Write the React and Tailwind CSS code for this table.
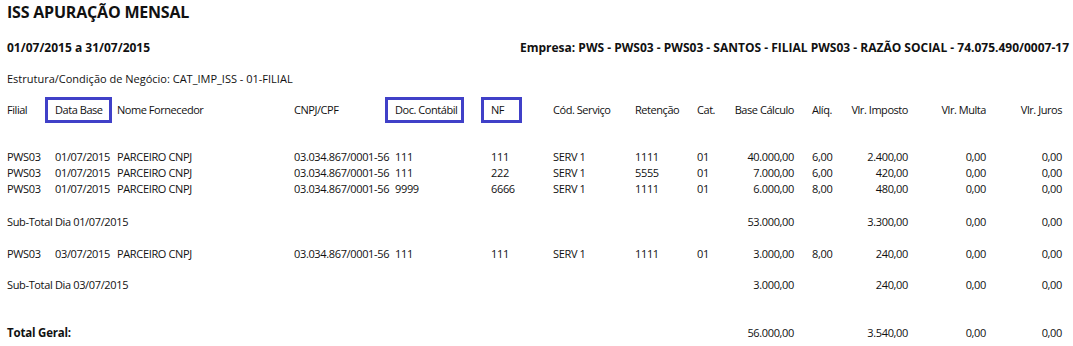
import React from 'react'

const cols = 'grid grid-cols-[48px_62px_177px_101px_96px_62px_82px_62px_27px_70px_54px_60px_78px_76px]'

const rows1 = [
  { filial: 'PWS03', data: '01/07/2015', nome: 'PARCEIRO CNPJ', cnpj: '03.034.867/0001-56', doc: '111', nf: '111', cod: 'SERV 1', ret: '1111', cat: '01', base: '40.000,00', aliq: '6,00', imp: '2.400,00', multa: '0,00', juros: '0,00' },
  { filial: 'PWS03', data: '01/07/2015', nome: 'PARCEIRO CNPJ', cnpj: '03.034.867/0001-56', doc: '111', nf: '222', cod: 'SERV 1', ret: '5555', cat: '01', base: '7.000,00', aliq: '6,00', imp: '420,00', multa: '0,00', juros: '0,00' },
  { filial: 'PWS03', data: '01/07/2015', nome: 'PARCEIRO CNPJ', cnpj: '03.034.867/0001-56', doc: '9999', nf: '6666', cod: 'SERV 1', ret: '1111', cat: '01', base: '6.000,00', aliq: '8,00', imp: '480,00', multa: '0,00', juros: '0,00' },
]

const rows2 = [
  { filial: 'PWS03', data: '03/07/2015', nome: 'PARCEIRO CNPJ', cnpj: '03.034.867/0001-56', doc: '111', nf: '111', cod: 'SERV 1', ret: '1111', cat: '01', base: '3.000,00', aliq: '8,00', imp: '240,00', multa: '0,00', juros: '0,00' },
]

function Row({ r }) {
  return (
    <div className={`${cols} h-4 leading-4 whitespace-nowrap tracking-[-0.35px]`}>
      <span>{r.filial}</span>
      <span>{r.data}</span>
      <span>{r.nome}</span>
      <span>{r.cnpj}</span>
      <span>{r.doc}</span>
      <span>{r.nf}</span>
      <span>{r.cod}</span>
      <span>{r.ret}</span>
      <span>{r.cat}</span>
      <span className="text-right">{r.base}</span>
      <span className="pl-[18px]">{r.aliq}</span>
      <span className="text-right">{r.imp}</span>
      <span className="text-right">{r.multa}</span>
      <span className="text-right">{r.juros}</span>
    </div>
  )
}

function Totals({ label, base, imp, bold, className = '' }) {
  return (
    <div className={`${cols} h-4 leading-4 whitespace-nowrap tracking-[-0.35px] ${className}`}>
      <span className={`col-span-9 ${bold ? 'font-bold text-[11.5px] tracking-[-0.2px]' : ''}`}>{label}</span>
      <span className="text-right">{base}</span>
      <span />
      <span className="text-right">{imp}</span>
      <span className="text-right">0,00</span>
      <span className="text-right">0,00</span>
    </div>
  )
}

function Boxed({ children, w }) {
  return (
    <span className={`-ml-[10px] inline-flex h-[26px] ${w} items-center border-[3px] border-[#4040c8] pl-[7px]`}>
      {children}
    </span>
  )
}

export default function App() {
  return (
    <div className="w-[1073px] h-[346px] bg-white pl-[7px] pr-1 text-[11px] text-[#111] font-['Open_Sans','Noto_Sans',sans-serif] overflow-hidden">
      <h1 className="h-6 leading-6 text-[16px] font-bold tracking-[-0.2px]">ISS APURAÇÃO MENSAL</h1>

      <div className="mt-4 flex h-4 items-center justify-between text-[12px] font-bold leading-4">
        <span>01/07/2015 a 31/07/2015</span>
        <span>Empresa: PWS - PWS03 - PWS03 - SANTOS - FILIAL PWS03 - RAZÃO SOCIAL - 74.075.490/0007-17</span>
      </div>

      <div className="mt-[15px] h-4 leading-4">Estrutura/Condição de Negócio: CAT_IMP_ISS - 01-FILIAL</div>

      <div className={`${cols} mt-[10px] h-[26px] items-center whitespace-nowrap tracking-[-0.45px]`}>
        <span>Filial</span>
        <span><Boxed w="w-[67px]">Data Base</Boxed></span>
        <span>Nome Fornecedor</span>
        <span>CNPJ/CPF</span>
        <span><Boxed w="w-[79px]">Doc. Contábil</Boxed></span>
        <span><Boxed w="w-[41px]">NF</Boxed></span>
        <span>Cód. Serviço</span>
        <span>Retenção</span>
        <span>Cat.</span>
        <span className="text-right">Base Cálculo</span>
        <span className="pl-[18px]">Alíq.</span>
        <span className="text-right">Vlr. Imposto</span>
        <span className="text-right">Vlr. Multa</span>
        <span className="text-right">Vlr. Juros</span>
      </div>

      <div className="mt-[26px]">
        {rows1.map((r, i) => <Row key={i} r={r} />)}
      </div>
      <Totals className="mt-[17px]" label="Sub-Total Dia 01/07/2015" base="53.000,00" imp="3.300,00" />

      <div className="mt-4">
        {rows2.map((r, i) => <Row key={i} r={r} />)}
      </div>
      <Totals className="mt-[15px]" label="Sub-Total Dia 03/07/2015" base="3.000,00" imp="240,00" />

      <Totals className="mt-8" label="Total Geral:" base="56.000,00" imp="3.540,00" bold />
    </div>
  )
}
